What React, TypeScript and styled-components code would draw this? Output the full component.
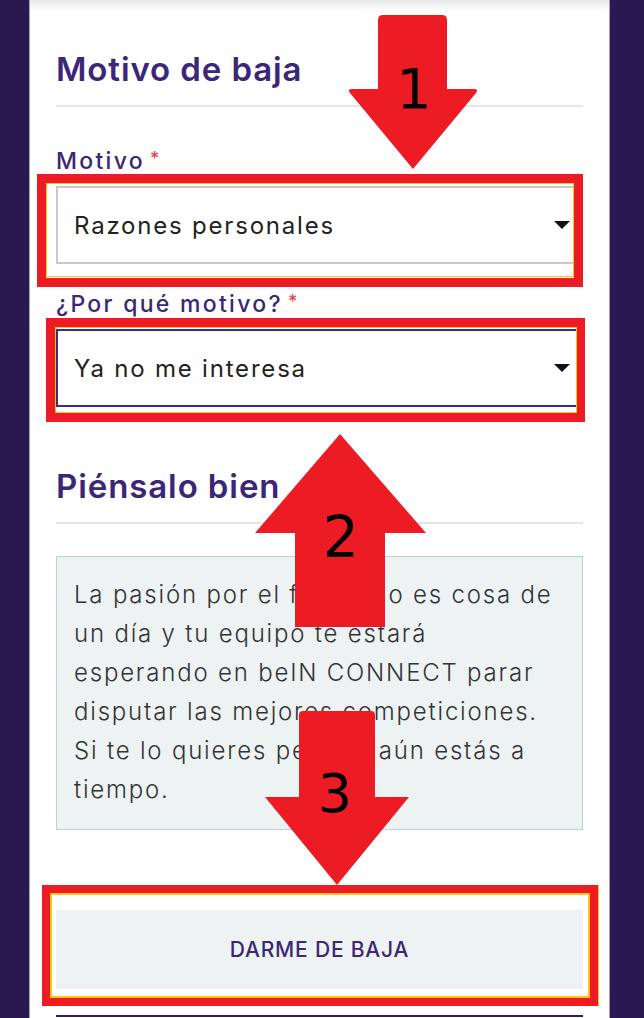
import React from "react";
import styled, { createGlobalStyle } from "styled-components";

const GlobalStyle = createGlobalStyle`
  html, body {
    margin: 0;
    padding: 0;
    overflow: hidden;
    background: #2a1850;
  }
  * { box-sizing: border-box; }
`;

const Page = styled.div`
  position: relative;
  width: 644px;
  height: 1018px;
  overflow: hidden;
  background: #2a1850;
  padding: 0 34px 0 29px;
`;

const Card = styled.main`
  min-height: 100%;
  background: linear-gradient(#e9e9e9 0px, #ffffff 11px);
  border-left: 1px solid #a99fca;
  border-right: 1px solid #a99fca;
  padding: 50px 26px 0 26px;
  display: flex;
  flex-direction: column;
  font-family: Inter, "Open Sans", sans-serif;

  & > * {
    flex-shrink: 0;
  }
`;

const SectionTitle = styled.h2<{ $gap: number }>`
  margin: ${(p) => p.$gap}px 0 0 0;
  padding-bottom: 17px;
  border-bottom: 2px solid #e6e6e6;
  font-size: 33px;
  line-height: 38px;
  font-weight: 600;
  letter-spacing: 0.9px;
  color: #3b2677;
`;

const Label = styled.label<{ $gap: number }>`
  display: block;
  margin-top: ${(p) => p.$gap}px;
  font-size: 23px;
  line-height: 28px;
  font-weight: 500;
  letter-spacing: 2.3px;
  color: #3b2677;
`;

const Required = styled.span`
  margin-left: 5px;
  font-size: 18px;
  vertical-align: 4px;
  letter-spacing: 0;
  color: #e04848;
`;

const SelectField = styled.div<{ $focused?: boolean }>`
  margin-top: 11px;
  height: 78px;
  display: flex;
  align-items: center;
  justify-content: space-between;
  padding: 0 11px 0 16px;
  background: #ffffff;
  border: 2px solid ${(p) => (p.$focused ? "#3f2d7c" : "#c9c9c9")};
  font-size: 24px;
  letter-spacing: 1.8px;
  color: #222222;
`;

const Caret = styled.span`
  width: 0;
  height: 0;
  border-left: 8px solid transparent;
  border-right: 8px solid transparent;
  border-top: 8px solid #111111;
`;

const InfoBox = styled.div`
  margin-top: 32px;
  padding: 18px 18px 20px 17px;
  background: #edf3f3;
  border: 1px solid #b7d4d4;
  font-size: 24px;
  line-height: 39px;
  font-weight: 300;
  letter-spacing: 1.8px;
  color: #333333;
  white-space: nowrap;
`;

const PrimaryButton = styled.button`
  margin-top: 80px;
  height: 79px;
  border: none;
  background: #edf3f2;
  font-family: Inter, "Open Sans", sans-serif;
  font-size: 21px;
  font-weight: 500;
  letter-spacing: 0.8px;
  color: #3b2677;
`;

/* top edge of the next action block, just entering the viewport */
const NextActionEdge = styled.div`
  margin-top: 26px;
  height: 40px;
  border-top: 2px solid #2f1d62;
`;

const Overlay = styled.svg`
  position: absolute;
  top: 0;
  left: 0;
  pointer-events: none;
`;

const Step = styled.text`
  font-family: "DejaVu Sans", sans-serif;
  fill: #000000;
`;

const RED = "#ed1c24";
const YELLOW = "#ffc90e";

function Markers() {
  return (
    <Overlay width={644} height={1018} viewBox="0 0 644 1018">
      {/* highlight frames */}
      <line x1={37} y1={174.5} x2={583} y2={174.5} stroke={YELLOW} strokeWidth={1} />
      <rect x={41.5} y={178.5} width={537} height={104} fill="none" stroke={RED} strokeWidth={9} />
      <rect x={46.5} y={183.5} width={527} height={93} fill="none" stroke={YELLOW} strokeWidth={1} />

      <line x1={46} y1={318.5} x2={585} y2={318.5} stroke={YELLOW} strokeWidth={1} />
      <rect x={50.5} y={322.5} width={530} height={95} fill="none" stroke={RED} strokeWidth={9} />
      <rect x={55.5} y={327.5} width={521} height={85} fill="none" stroke={YELLOW} strokeWidth={1} />

      <rect x={46} y={889} width={548} height={113} fill="none" stroke={RED} strokeWidth={8} />
      <rect x={51} y={894} width={538} height={103} fill="none" stroke={YELLOW} strokeWidth={2} />
      <line x1={598.5} y1={885} x2={598.5} y2={1007} stroke={YELLOW} strokeWidth={1} />

      {/* step arrows */}
      <path
        d="M378 20 Q378 15 383 15 L442 15 Q447 15 447 20 L447 89 L474 89 Q479 89 476 93 L413 169 L350 93 Q347 89 352 89 L378 89 Z"
        fill={RED}
      />
      <path d="M340 434 L426 533 L385 533 L385 627 L295 627 L295 533 L255 533 Z" fill={RED} />
      <path
        d="M299 715 Q299 711 303 711 L371 711 Q375 711 375 715 L375 797 L409 797 L337 885 L265 797 L299 797 Z"
        fill={RED}
      />

      <Step x={414} y={108} fontSize={55} textAnchor="middle">1</Step>
      <Step x={341} y={557} fontSize={57} textAnchor="middle">2</Step>
      <Step x={335} y={812} fontSize={54} textAnchor="middle">3</Step>
    </Overlay>
  );
}

export default function App() {
  return (
    <>
      <GlobalStyle />
      <Page>
        <Card>
          <SectionTitle $gap={0}>Motivo de baja</SectionTitle>

          <Label $gap={38}>
            Motivo<Required>*</Required>
          </Label>
          <SelectField>
            <span>Razones personales</span>
            <Caret />
          </SelectField>

          <Label $gap={24}>
            ¿Por qué motivo?<Required>*</Required>
          </Label>
          <SelectField $focused>
            <span>Ya no me interesa</span>
            <Caret />
          </SelectField>

          <SectionTitle $gap={60}>Piénsalo bien</SectionTitle>

          <InfoBox>
            La pasión por el fútbol no es cosa de
            <br />
            un día y tu equipo te estará
            <br />
            esperando en beIN CONNECT parar
            <br />
            disputar las mejores competiciones.
            <br />
            Si te lo quieres pensar, aún estás a
            <br />
            tiempo.
          </InfoBox>

          <PrimaryButton type="button">DARME DE BAJA</PrimaryButton>
          <NextActionEdge />
        </Card>
        <Markers />
      </Page>
    </>
  );
}
